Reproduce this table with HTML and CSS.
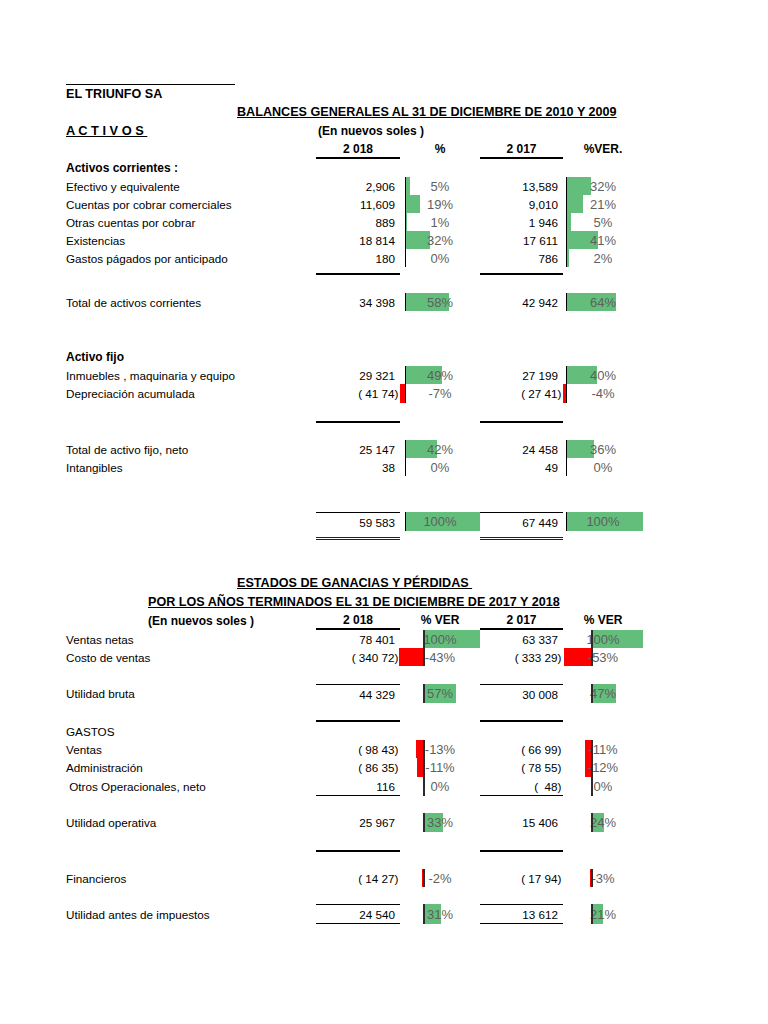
FILE: index.html
```html
<!DOCTYPE html>
<html lang="es">
<head>
<meta charset="utf-8">
<title>EL TRIUNFO SA</title>
<link rel="stylesheet" href="styles.css">
</head>
<body>
<div class="page">
  <div class="toprule"></div>
  <div class="t">EL TRIUNFO SA</div>
  <div class="t t1"><span class="u">BALANCES GENERALES AL 31 DE DICIEMBRE DE 2010 Y 2009</span></div>
  <div class="row h19">
    <div class="b big"><span class="u">A C T I V O S </span></div>
    <div class="b sub">(En nuevos soles )</div>
  </div>
  <div class="row h19 hdr">
    <div></div>
    <div class="hv">2 018</div><div class="hp">%</div><div class="hv">2 017</div><div class="hp">%VER.</div>
  </div>
  <div class="row"><div class="b">Activos corrientes :</div></div>

  <div class="row">
    <div>Efectivo y equivalente</div>
    <div class="v">2,906</div>
    <div class="bc s1a"><span class="bar" style="width:3.7px"></span><span class="pct">5%</span></div>
    <div class="v">13,589</div>
    <div class="bc s1b"><span class="bar" style="width:24.3px"></span><span class="pct">32%</span></div>
  </div>
  <div class="row">
    <div>Cuentas por cobrar comerciales</div>
    <div class="v">11,609</div>
    <div class="bc s1a"><span class="bar" style="width:14px"></span><span class="pct">19%</span></div>
    <div class="v">9,010</div>
    <div class="bc s1b"><span class="bar" style="width:16px"></span><span class="pct">21%</span></div>
  </div>
  <div class="row">
    <div>Otras cuentas por cobrar</div>
    <div class="v">889</div>
    <div class="bc s1a"><span class="bar" style="width:0.7px"></span><span class="pct">1%</span></div>
    <div class="v">1 946</div>
    <div class="bc s1b"><span class="bar" style="width:3.8px"></span><span class="pct">5%</span></div>
  </div>
  <div class="row">
    <div>Existencias</div>
    <div class="v">18 814</div>
    <div class="bc s1a"><span class="bar" style="width:23.7px"></span><span class="pct">32%</span></div>
    <div class="v">17 611</div>
    <div class="bc s1b"><span class="bar" style="width:31.2px"></span><span class="pct">41%</span></div>
  </div>
  <div class="row">
    <div>Gastos págados por anticipado</div>
    <div class="v">180</div>
    <div class="bc s1a"><span class="pct">0%</span></div>
    <div class="v">786</div>
    <div class="bc s1b"><span class="bar" style="width:1.5px"></span><span class="pct">2%</span></div>
  </div>

  <div class="row rule mt6"><div></div><div class="rl"></div><div></div><div class="rl"></div></div>

  <div class="row mt18">
    <div>Total de activos corrientes</div>
    <div class="v">34 398</div>
    <div class="bc s1a"><span class="bar" style="width:42.9px"></span><span class="pct">58%</span></div>
    <div class="v">42 942</div>
    <div class="bc s1b"><span class="bar" style="width:48.6px"></span><span class="pct">64%</span></div>
  </div>

  <div class="row mt37"><div class="b">Activo fijo</div></div>
  <div class="row">
    <div>Inmuebles , maquinaria y equipo</div>
    <div class="v">29 321</div>
    <div class="bc s1a"><span class="bar" style="width:36.3px"></span><span class="pct">49%</span></div>
    <div class="v">27 199</div>
    <div class="bc s1b"><span class="bar" style="width:30.4px"></span><span class="pct">40%</span></div>
  </div>
  <div class="row h19">
    <div>Depreciación acumulada</div>
    <div class="v ng">( 41 74)</div>
    <div class="bc s1a"><span class="nbar" style="width:5.2px"></span><span class="pct">-7%</span></div>
    <div class="v ng">( 27 41)</div>
    <div class="bc s1b"><span class="nbar" style="width:3px"></span><span class="pct">-4%</span></div>
  </div>

  <div class="row rule mt18"><div></div><div class="rl"></div><div></div><div class="rl"></div></div>

  <div class="row mt17">
    <div>Total de activo fijo, neto</div>
    <div class="v">25 147</div>
    <div class="bc s1a"><span class="bar" style="width:31.1px"></span><span class="pct">42%</span></div>
    <div class="v">24 458</div>
    <div class="bc s1b"><span class="bar" style="width:27.4px"></span><span class="pct">36%</span></div>
  </div>
  <div class="row">
    <div>Intangibles</div>
    <div class="v">38</div>
    <div class="bc s1a"><span class="pct">0%</span></div>
    <div class="v">49</div>
    <div class="bc s1b"><span class="pct">0%</span></div>
  </div>

  <div class="row h19 mt36 tot">
    <div></div>
    <div class="v tl">59 583</div>
    <div class="bc s1a"><span class="bar" style="width:74px"></span><span class="pct">100%</span></div>
    <div class="v tl">67 449</div>
    <div class="bc s1b"><span class="bar" style="width:76px"></span><span class="pct">100%</span></div>
  </div>
  <div class="row dbl mt6"><div></div><div class="dl"></div><div></div><div class="dl"></div></div>

  <div class="t t1 mt34"><span class="u">ESTADOS DE GANACIAS Y PÉRDIDAS </span></div>
  <div class="t t2 h19"><span class="u">POR LOS AÑOS TERMINADOS EL 31 DE DICIEMBRE DE 2017 Y 2018</span></div>
  <div class="row h19 hdr">
    <div class="b sub2">(En nuevos soles )</div>
    <div class="hv">2 018</div><div class="hp">% VER</div><div class="hv">2 017</div><div class="hp">% VER</div>
  </div>
  <div class="row">
    <div>Ventas netas</div>
    <div class="v">78 401</div>
    <div class="bc s2a"><span class="bar" style="width:56px"></span><span class="pct">100%</span></div>
    <div class="v">63 337</div>
    <div class="bc s2b"><span class="bar" style="width:51px"></span><span class="pct">100%</span></div>
  </div>
  <div class="row">
    <div>Costo de ventas</div>
    <div class="v ng">( 340 72)</div>
    <div class="bc s2a"><span class="nbar" style="width:24px"></span><span class="pct">-43%</span></div>
    <div class="v ng">( 333 29)</div>
    <div class="bc s2b"><span class="nbar" style="width:27px"></span><span class="pct">-53%</span></div>
  </div>

  <div class="row h19 mt18 top1">
    <div>Utilidad bruta</div>
    <div class="v tl">44 329</div>
    <div class="bc s2a"><span class="bar" style="width:32px"></span><span class="pct">57%</span></div>
    <div class="v tl">30 008</div>
    <div class="bc s2b"><span class="bar" style="width:24px"></span><span class="pct">47%</span></div>
  </div>

  <div class="row rule mt17"><div></div><div class="rl"></div><div></div><div class="rl"></div></div>

  <div class="row"><div>GASTOS</div></div>
  <div class="row">
    <div>Ventas</div>
    <div class="v ng">( 98 43)</div>
    <div class="bc s2a"><span class="nbar" style="width:7.3px"></span><span class="pct">-13%</span></div>
    <div class="v ng">( 66 99)</div>
    <div class="bc s2b"><span class="nbar" style="width:5.6px"></span><span class="pct">-11%</span></div>
  </div>
  <div class="row h19">
    <div>Administración</div>
    <div class="v ng">( 86 35)</div>
    <div class="bc s2a"><span class="nbar" style="width:6.2px"></span><span class="pct">-11%</span></div>
    <div class="v ng">( 78 55)</div>
    <div class="bc s2b"><span class="nbar" style="width:6.1px"></span><span class="pct">-12%</span></div>
  </div>
  <div class="row h19">
    <div class="pre"> Otros Operacionales, neto</div>
    <div class="v bl">116</div>
    <div class="bc s2a"><span class="pct">0%</span></div>
    <div class="v ng bl">(  48)</div>
    <div class="bc s2b"><span class="pct">0%</span></div>
  </div>

  <div class="row h19 mt17">
    <div>Utilidad operativa</div>
    <div class="v">25 967</div>
    <div class="bc s2a"><span class="bar" style="width:18.5px"></span><span class="pct">33%</span></div>
    <div class="v">15 406</div>
    <div class="bc s2b"><span class="bar" style="width:12.2px"></span><span class="pct">24%</span></div>
  </div>

  <div class="row rule mt18"><div></div><div class="rl"></div><div></div><div class="rl"></div></div>

  <div class="row mt17">
    <div>Financieros</div>
    <div class="v ng">( 14 27)</div>
    <div class="bc s2a"><span class="nbar" style="width:1.1px"></span><span class="pct">-2%</span></div>
    <div class="v ng">( 17 94)</div>
    <div class="bc s2b"><span class="nbar" style="width:1.5px"></span><span class="pct">-3%</span></div>
  </div>

  <div class="row h20 mt17">
    <div>Utilidad antes de impuestos</div>
    <div class="v tl bl">24 540</div>
    <div class="bc s2a"><span class="bar" style="width:17.4px"></span><span class="pct">31%</span></div>
    <div class="v tl bl">13 612</div>
    <div class="bc s2b"><span class="bar" style="width:10.7px"></span><span class="pct">21%</span></div>
  </div>
</div>
</body>
</html>
```

FILE: styles.css
```css
html, body {
  margin: 0;
  background: #ffffff;
}

body {
  font-family: "Liberation Sans", Arial, sans-serif;
  color: #000000;
}

.page {
  padding: 84px 0 40px 66px;
}

.toprule {
  width: 169px;
  height: 0;
  border-top: 1px solid #000;
}

.t {
  height: 18px;
  display: flex;
  align-items: center;
  font-weight: bold;
  font-size: 12.6px;
  white-space: pre;
}

.t1 { padding-left: 171px; }
.t2 { padding-left: 82px; }

.u {
  text-decoration: underline;
  text-underline-offset: 1px;
}

.b { font-weight: bold; font-size: 12px; }
.b.big { font-size: 12.8px; }

.row {
  display: grid;
  grid-template-columns: 250px 84px 80px 83px 80px;
  height: 18px;
  font-size: 11.7px;
  box-sizing: border-box;
}

.row > div {
  display: flex;
  align-items: center;
  min-width: 0;
  box-sizing: border-box;
  white-space: pre;
}

.h19 { height: 19px; }
.h20 { height: 20px; }

.mt6 { margin-top: 6px; }
.mt17 { margin-top: 17px; }
.mt18 { margin-top: 18px; }
.mt34 { margin-top: 34px; }
.mt36 { margin-top: 36px; }
.mt37 { margin-top: 37px; }

.sub {
  grid-column: 2 / span 3;
  padding-left: 2px;
}

.sub2 { padding-left: 82px; }

.hdr .hv {
  justify-content: center;
  font-weight: bold;
  font-size: 12px;
  border-bottom: 2px solid #000;
}

.hdr .hp {
  justify-content: center;
  font-weight: bold;
  font-size: 12px;
  padding-bottom: 2px;
}

.v {
  justify-content: flex-end;
  padding-right: 5px;
}

.v.ng { padding-right: 1.5px; }

.tl { border-top: 1px solid #000; }
.bl { border-bottom: 1px solid #000; }

.rule { height: 2px; }
.rule .rl { background: #000; }

.dbl { height: 3px; }
.dbl .dl { border-top: 3px double #222; }

/* data bar cells */
.bc {
  position: relative;
  justify-content: center;
}

.s1a { --ax: 6px; --axw: 1px; --axc: #000; }
.s1b { --ax: 4px; --axw: 1px; --axc: #000; }
.s2a { --ax: 24px; --axw: 2px; --axc: #2b2b2b; }
.s2b { --ax: 29px; --axw: 2px; --axc: #2b2b2b; }

.bc::after {
  content: "";
  position: absolute;
  top: 0;
  bottom: 0;
  left: calc(var(--ax) - 1px);
  width: var(--axw);
  background: var(--axc);
  z-index: 2;
}

.bar {
  position: absolute;
  top: 0;
  bottom: 0;
  left: var(--ax);
  background: #63be7b;
}

.nbar {
  position: absolute;
  top: 0;
  bottom: 0;
  right: calc(100% - var(--ax) + 1px);
  background: #ff0000;
}

.pct {
  position: relative;
  z-index: 1;
  font-size: 13px;
  color: #5f5f5f;
}
```
